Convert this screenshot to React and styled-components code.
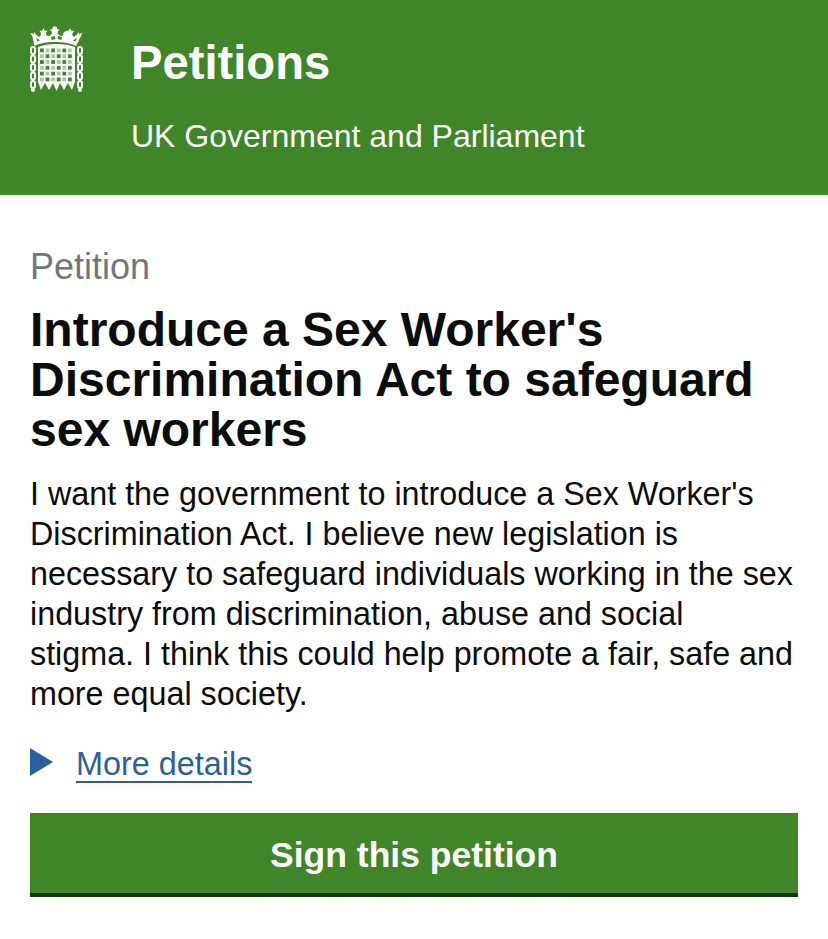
import React from 'react';
import styled, { createGlobalStyle } from 'styled-components';

const GlobalStyle = createGlobalStyle`
  html, body {
    margin: 0;
    padding: 0;
    background: #fff;
    font-family: "Liberation Sans", Arial, sans-serif;
  }
`;

const Page = styled.div`
  width: 828px;
  height: 939px;
  overflow: hidden;
  background: #fff;
`;

const Header = styled.header`
  height: 195px;
  box-sizing: border-box;
  background: #3f8628;
  padding: 26px 0 0 30px;
  display: flex;
  gap: 48px;
  color: #fff;
`;

const Logo = styled.svg`
  width: 53px;
  height: 66px;
  flex: none;
`;

const Brand = styled.div`
  display: flex;
  flex-direction: column;
`;

const BrandName = styled.div`
  font-size: 47.2px;
  font-weight: 700;
  line-height: 74px;
`;

const BrandSub = styled.div`
  font-size: 32px;
  line-height: 36px;
  margin-top: 18px;
`;

const Main = styled.main`
  padding: 50px 30px 0;
`;

const Kicker = styled.div`
  font-size: 36px;
  line-height: 44px;
  color: #73777a;
`;

const Title = styled.h1`
  margin: 16px 0 0;
  font-size: 48px;
  line-height: 50px;
  font-weight: 700;
  color: #0b0c0c;
`;

const Body = styled.p`
  margin: 19px 0 0;
  font-size: 32.3px;
  line-height: 40px;
  color: #0b0c0c;
`;

const Details = styled.div`
  display: flex;
  align-items: center;
  gap: 23px;
  margin-top: 31px;
  height: 40px;
`;

const Arrow = styled.span`
  width: 0;
  height: 0;
  margin-bottom: 6px;
  border-style: solid;
  border-width: 14px 0 14px 23px;
  border-color: transparent transparent transparent #2a5ea5;
`;

const DetailsLink = styled.a`
  font-size: 32.4px;
  line-height: 34px;
  color: #2b5f9e;
  text-decoration: none;
  border-bottom: 2px solid #2b5f9e;
`;

const SignButton = styled.button`
  display: block;
  width: 768px;
  height: 84px;
  margin-top: 28px;
  padding: 4px 0 0;
  box-sizing: border-box;
  background: #3f8628;
  border: none;
  border-bottom: 4px solid #143606;
  color: #fff;
  font-family: inherit;
  font-size: 35.500px;
  font-weight: 700;
`;

const chainYs = [21, 29.500, 38, 46.500, 55];
const holes = [];
for (let r = 0; r < 6; r++) {
  for (let c = 0; c < 6; c++) {
    holes.push({ x: 10 + c * 5.6, y: 22.500 + r * 5.8, solid: (r + c) % 2 === 0 });
  }
}

const PortcullisLogo = () => (
  <Logo viewBox="0 0 53 66">
    {/* crown */}
    <path
      fill="#fff"
      d="M.5 7l3.500 1 .5-2 1.500 2.500L9 11l2-2-.5-2.500L9.500 5l3-.5L13.500 2l1 2.500 3 .5-1.500 1.500.5 3 3 .5 2.500-2.500-.5-2.500-2-1 3-1 .5-2.500h3.500l.5 2.500 3 1-2 1-.5 2.500 2.500 2.500 3-.5.5-3L36 5l3-.5 1-2.500 1 2.500 3 .5-1 1.500L42 9l2 2 3-2.500L48.500 6l.5 2 3.500-1-2 4-4.500 9c-5-2.500-12-4-21-4s-16 1.500-20.500 4L2.500 11z"
    />
    <path fill="#3f8628" d="M6 11.500l4 3-2.500 1zM47 11.500l-4 3 2.500 1zM21 11l4-1 .5 3-4 1zM32 11l-4-1-.5 3 4 1z" />
    {/* portcullis body */}
    <path
      fill="#fff"
      d="M8 21c5-2 11-3 18.500-3s13.500 1 18.500 3v35l-3 8-4-7-4 7-4-7-3.500 8-3.500-8-4 7-4-7-4 7-3-8z"
    />
    {holes.map((h, i) => (
      <rect
        key={i}
        x={h.x}
        y={h.y}
        width="3.800"
        height="3.800"
        fill="#3f8628"
        fillOpacity={h.solid ? 1 : 0.45}
      />
    ))}
    {/* chains */}
    {chainYs.map((y) => (
      <g key={y} fill="none" stroke="#fff" strokeWidth="2">
        <rect x="1" y={y} width="4" height="7" rx="2" />
        <rect x="48" y={y} width="4" height="7" rx="2" />
      </g>
    ))}
    <circle cx="3" cy="64" r="2" fill="#fff" />
    <circle cx="50" cy="64" r="2" fill="#fff" />
  </Logo>
);

export default function App() {
  return (
    <Page>
      <GlobalStyle />
      <Header>
        <PortcullisLogo />
        <Brand>
          <BrandName>Petitions</BrandName>
          <BrandSub>UK Government and Parliament</BrandSub>
        </Brand>
      </Header>
      <Main>
        <Kicker>Petition</Kicker>
        <Title>
          Introduce a Sex Worker's
          <br />
          Discrimination Act to safeguard
          <br />
          sex workers
        </Title>
        <Body>
          I want the government to introduce a Sex Worker's
          <br />
          Discrimination Act. I believe new legislation is
          <br />
          necessary to safeguard individuals working in the sex
          <br />
          industry from discrimination, abuse and social
          <br />
          stigma. I think this could help promote a fair, safe and
          <br />
          more equal society.
        </Body>
        <Details>
          <Arrow />
          <DetailsLink href="#">More details</DetailsLink>
        </Details>
        <SignButton>Sign this petition</SignButton>
      </Main>
    </Page>
  );
}
